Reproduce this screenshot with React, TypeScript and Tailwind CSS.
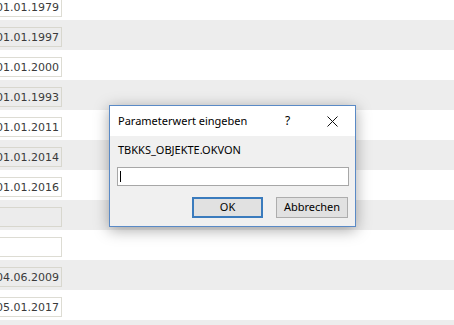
import React from "react";

const rows: { v: string; gray: boolean }[] = [
  { v: "01.01.1979", gray: false },
  { v: "01.01.1997", gray: true },
  { v: "01.01.2000", gray: false },
  { v: "01.01.1993", gray: true },
  { v: "01.01.2011", gray: false },
  { v: "01.01.2014", gray: true },
  { v: "01.01.2016", gray: false },
  { v: "", gray: true },
  { v: "", gray: false },
  { v: "04.06.2009", gray: true },
  { v: "05.01.2017", gray: false },
  { v: "", gray: true },
];

export default function App() {
  return (
    <div className="relative w-[454px] h-[325px] overflow-hidden bg-white">
      <div className="-mt-[10px] flex flex-col">
        {rows.map((r, i) => (
          <div
            key={i}
            className={
              "h-[30px] w-full flex items-start " +
              (r.gray ? "bg-[#ededed]" : "bg-white")
            }
          >
            {i < 11 && (
              <div
                className={
                  "mt-[7px] h-[20px] w-[62px] flex items-center justify-end pr-[2px] overflow-hidden border border-l-0 " +
                  (r.gray ? "border-[#d8d7ce] bg-[#ececec]" : "border-[#dddcd3] bg-white")
                }
              >
                <span
                  className="whitespace-nowrap text-[11px] leading-none text-[#3a3a3a]"
                  style={{ fontFamily: '"DejaVu Sans", Verdana, sans-serif' }}
                >
                  {r.v}
                </span>
              </div>
            )}
          </div>
        ))}
      </div>

      {/* Dialog */}
      <div
        className="absolute left-[109px] top-[105px] w-[247px] h-[122px] border border-[#5a8ac6] bg-[#f0f0f0] flex flex-col shadow-[0_3px_14px_rgba(0,0,0,0.35)]"
        style={{ fontFamily: '"Noto Sans", "Open Sans", sans-serif' }}
      >
        <div className="h-[30px] bg-white flex items-center shrink-0">
          <div className="pl-[8px] flex-1 text-[11px] text-black whitespace-nowrap">
            Parameterwert eingeben
          </div>
          <div className="w-[45px] h-full flex items-center justify-center text-[12px] text-black">
            ?
          </div>
          <div className="w-[45px] h-full flex items-center justify-center">
            <svg width="11" height="11" viewBox="0 0 11 11">
              <path d="M0.5 0.5 L10.5 10.5 M10.5 0.5 L0.5 10.5" stroke="#111" strokeWidth="1" fill="none" />
            </svg>
          </div>
        </div>
        <div className="flex flex-col flex-1">
          <div className="pl-[8px] pt-[6px] h-[22px] leading-[16px] text-[11px] text-black whitespace-nowrap">
            TBKKS_OBJEKTE.OKVON
          </div>
          <div className="ml-[7px] mt-[9px] w-[232px] h-[19px] bg-white border border-[#a7a7a7] flex items-center pl-[2px]">
            <div className="w-px h-[11px] bg-black" />
          </div>
          <div className="mt-[11px] flex justify-end gap-[13px] pr-[7px]">
            <div className="w-[71px] h-[21px] border-2 border-[#3a7bbd] bg-[#e1e1e1] flex items-center justify-center text-[11px] text-black">
              OK
            </div>
            <div className="w-[72px] h-[21px] border border-[#adadad] bg-[#e1e1e1] flex items-center justify-center text-[11px] text-black">
              Abbrechen
            </div>
          </div>
        </div>
      </div>
    </div>
  );
}
